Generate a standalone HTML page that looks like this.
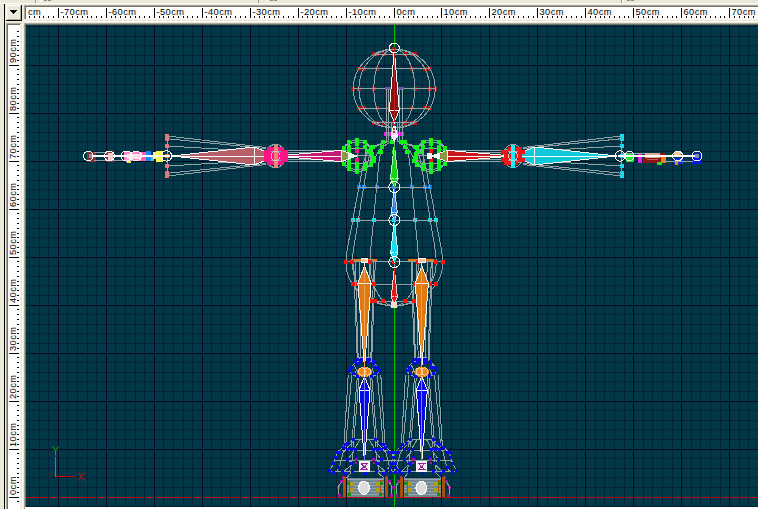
<!DOCTYPE html>
<html><head><meta charset="utf-8"><title>Front view</title>
<style>
html,body{margin:0;padding:0;background:#ece9d8;overflow:hidden}
body{width:758px;height:509px;position:relative;font-family:"Liberation Sans",sans-serif}
svg{position:absolute;left:0;top:0;display:block}
text{font-family:"Liberation Sans",sans-serif;font-size:9.3px;fill:#000;letter-spacing:0.42px}
</style></head><body>
<svg width="758" height="509" viewBox="0 0 758 509">
<rect width="758" height="509" fill="#ece9d8"/>
<!-- top strip -->
<g shape-rendering="crispEdges">
<rect x="0" y="0" width="758" height="3" fill="#ebe8d7"/>
<rect x="0" y="3" width="758" height="1" fill="#ffffff"/>
<rect x="35" y="0" width="1" height="3" fill="#9d9a88"/><rect x="40" y="0" width="2" height="2" fill="#ffffff"/>
<rect x="44" y="0" width="3" height="1" fill="#8c8a7c"/><rect x="48" y="0" width="3" height="1" fill="#8c8a7c"/>
<rect x="258" y="0" width="1" height="3" fill="#9d9a88"/><rect x="266" y="0" width="1" height="2" fill="#ffffff"/>
<rect x="270" y="0" width="3" height="1" fill="#8c8a7c"/><rect x="274" y="0" width="3" height="1" fill="#8c8a7c"/>
<rect x="621" y="0" width="1" height="3" fill="#9d9a88"/><rect x="623" y="0" width="1" height="2" fill="#ffffff"/>
<rect x="627" y="0" width="3" height="1" fill="#8c8a7c"/><rect x="631" y="0" width="3" height="1" fill="#8c8a7c"/>
<!-- left black line -->
<rect x="4" y="4" width="1" height="505" fill="#000"/>
<!-- button -->
<rect x="6" y="5" width="16" height="16" fill="#ece9d8"/>
<rect x="6" y="5" width="15" height="1" fill="#fff"/><rect x="6" y="5" width="1" height="15" fill="#fff"/>
<rect x="6" y="20" width="16" height="1" fill="#000"/><rect x="21" y="5" width="1" height="16" fill="#000"/>
<rect x="7" y="19" width="14" height="1" fill="#aca899"/><rect x="20" y="6" width="1" height="14" fill="#aca899"/>
<path d="M10 10h7v1h-1v1h-1v1h-1v1h-1v-1h-1v-1h-1v-1h-1z" fill="#000"/>
<!-- horizontal ruler -->
<rect x="24" y="5" width="734" height="1" fill="#aca899"/>
<rect x="24" y="5" width="1" height="15" fill="#aca899"/>
<rect x="25" y="6" width="733" height="1" fill="#716f64"/>
<rect x="25" y="6" width="1" height="14" fill="#716f64"/>
<rect x="26" y="7" width="732" height="12" fill="#fff"/>
<rect x="24" y="19" width="734" height="1" fill="#f4f2e8"/>
<rect x="24" y="21" width="734" height="1" fill="#fff"/>
<!-- vertical ruler -->
<rect x="6" y="23" width="15" height="1" fill="#aca899"/>
<rect x="6" y="23" width="1" height="486" fill="#aca899"/>
<rect x="7" y="24" width="14" height="1" fill="#716f64"/>
<rect x="7" y="24" width="1" height="485" fill="#716f64"/>
<rect x="8" y="25" width="12" height="484" fill="#fff"/>
<rect x="20" y="24" width="1" height="485" fill="#f4f2e8"/>
<rect x="22" y="23" width="1" height="486" fill="#fff"/>
<!-- viewport frame -->
<rect x="24" y="23" width="734" height="1" fill="#aca899"/>
<rect x="24" y="23" width="1" height="486" fill="#aca899"/>
<rect x="25" y="24" width="733" height="1" fill="#716f64"/>
<rect x="25" y="24" width="1" height="485" fill="#716f64"/>
<rect x="26" y="25" width="732" height="482" fill="#003848"/>
<rect x="25" y="507" width="733" height="2" fill="#fff"/>
<path stroke="#000" stroke-width="1" d="M29.5 16V18M34.5 16V18M39.5 16V18M43.5 16V18M48.5 16V18M53.5 16V18M58.5 8V18M63.5 16V18M67.5 16V18M72.5 16V18M77.5 16V18M82.5 16V18M87.5 16V18M91.5 16V18M96.5 16V18M101.5 16V18M106.5 8V18M111.5 16V18M115.5 16V18M120.5 16V18M125.5 16V18M130.5 16V18M135.5 16V18M139.5 16V18M144.5 16V18M149.5 16V18M154.5 8V18M159.5 16V18M163.5 16V18M168.5 16V18M173.5 16V18M178.5 16V18M183.5 16V18M187.5 16V18M192.5 16V18M197.5 16V18M202.5 8V18M206.5 16V18M211.5 16V18M216.5 16V18M221.5 16V18M226.5 16V18M230.5 16V18M235.5 16V18M240.5 16V18M245.5 16V18M250.5 8V18M254.5 16V18M259.5 16V18M264.5 16V18M269.5 16V18M274.5 16V18M278.5 16V18M283.5 16V18M288.5 16V18M293.5 16V18M298.5 8V18M302.5 16V18M307.5 16V18M312.5 16V18M317.5 16V18M322.5 16V18M326.5 16V18M331.5 16V18M336.5 16V18M341.5 16V18M346.5 8V18M350.5 16V18M355.5 16V18M360.5 16V18M365.5 16V18M370.5 16V18M374.5 16V18M379.5 16V18M384.5 16V18M389.5 16V18M394.5 8V18M398.5 16V18M403.5 16V18M408.5 16V18M413.5 16V18M417.5 16V18M422.5 16V18M427.5 16V18M432.5 16V18M437.5 16V18M441.5 8V18M446.5 16V18M451.5 16V18M456.5 16V18M461.5 16V18M465.5 16V18M470.5 16V18M475.5 16V18M480.5 16V18M485.5 16V18M489.5 8V18M494.5 16V18M499.5 16V18M504.5 16V18M509.5 16V18M513.5 16V18M518.5 16V18M523.5 16V18M528.5 16V18M533.5 16V18M537.5 8V18M542.5 16V18M547.5 16V18M552.5 16V18M557.5 16V18M561.5 16V18M566.5 16V18M571.5 16V18M576.5 16V18M581.5 16V18M585.5 8V18M590.5 16V18M595.5 16V18M600.5 16V18M604.5 16V18M609.5 16V18M614.5 16V18M619.5 16V18M624.5 16V18M628.5 16V18M633.5 8V18M638.5 16V18M643.5 16V18M648.5 16V18M652.5 16V18M657.5 16V18M662.5 16V18M667.5 16V18M672.5 16V18M676.5 16V18M681.5 8V18M686.5 16V18M691.5 16V18M696.5 16V18M700.5 16V18M705.5 16V18M710.5 16V18M715.5 16V18M720.5 16V18M724.5 16V18M729.5 8V18M734.5 16V18M739.5 16V18M744.5 16V18M748.5 16V18M753.5 16V18M17 501.5H19M9 497.5H19M17 492.5H19M17 487.5H19M17 482.5H19M17 477.5H19M17 473.5H19M17 468.5H19M17 463.5H19M17 458.5H19M17 453.5H19M9 449.5H19M17 444.5H19M17 439.5H19M17 434.5H19M17 429.5H19M17 425.5H19M17 420.5H19M17 415.5H19M17 410.5H19M17 405.5H19M9 401.5H19M17 396.5H19M17 391.5H19M17 386.5H19M17 381.5H19M17 377.5H19M17 372.5H19M17 367.5H19M17 362.5H19M17 357.5H19M9 353.5H19M17 348.5H19M17 343.5H19M17 338.5H19M17 333.5H19M17 329.5H19M17 324.5H19M17 319.5H19M17 314.5H19M17 309.5H19M9 305.5H19M17 300.5H19M17 295.5H19M17 290.5H19M17 285.5H19M17 281.5H19M17 276.5H19M17 271.5H19M17 266.5H19M17 261.5H19M9 257.5H19M17 252.5H19M17 247.5H19M17 242.5H19M17 237.5H19M17 233.5H19M17 228.5H19M17 223.5H19M17 218.5H19M17 213.5H19M9 209.5H19M17 204.5H19M17 199.5H19M17 194.5H19M17 189.5H19M17 185.5H19M17 180.5H19M17 175.5H19M17 170.5H19M17 165.5H19M9 161.5H19M17 156.5H19M17 151.5H19M17 146.5H19M17 141.5H19M17 137.5H19M17 132.5H19M17 127.5H19M17 122.5H19M17 117.5H19M9 113.5H19M17 108.5H19M17 103.5H19M17 98.5H19M17 93.5H19M17 89.5H19M17 84.5H19M17 79.5H19M17 74.5H19M17 69.5H19M9 65.5H19M17 60.5H19M17 55.5H19M17 50.5H19M17 45.5H19M17 41.5H19M17 36.5H19M17 31.5H19"/>
</g>
<g><text x="28" y="15">cm</text><text x="60.5" y="15">-70cm</text><text x="108.5" y="15">-60cm</text><text x="156.5" y="15">-50cm</text><text x="204.5" y="15">-40cm</text><text x="252.5" y="15">-30cm</text><text x="300.5" y="15">-20cm</text><text x="348.5" y="15">-10cm</text><text x="396.5" y="15">0cm</text><text x="443.5" y="15">10cm</text><text x="491.5" y="15">20cm</text><text x="539.5" y="15">30cm</text><text x="587.5" y="15">40cm</text><text x="635.5" y="15">50cm</text><text x="683.5" y="15">60cm</text><text x="731.5" y="15">70cm</text><text transform="translate(15.7 495) rotate(-90)">0cm</text><text transform="translate(15.7 447) rotate(-90)">10cm</text><text transform="translate(15.7 399) rotate(-90)">20cm</text><text transform="translate(15.7 351) rotate(-90)">30cm</text><text transform="translate(15.7 303) rotate(-90)">40cm</text><text transform="translate(15.7 255) rotate(-90)">50cm</text><text transform="translate(15.7 207) rotate(-90)">60cm</text><text transform="translate(15.7 159) rotate(-90)">70cm</text><text transform="translate(15.7 111) rotate(-90)">80cm</text><text transform="translate(15.7 63) rotate(-90)">90cm</text></g>
<g shape-rendering="crispEdges">
<path stroke="#04223a" stroke-width="1" d="M26 506.5H758M26 487.5H758M26 477.5H758M26 468.5H758M26 458.5H758M26 439.5H758M26 429.5H758M26 420.5H758M26 410.5H758M26 391.5H758M26 381.5H758M26 372.5H758M26 362.5H758M26 343.5H758M26 333.5H758M26 324.5H758M26 314.5H758M26 295.5H758M26 285.5H758M26 276.5H758M26 266.5H758M26 247.5H758M26 237.5H758M26 228.5H758M26 218.5H758M26 199.5H758M26 189.5H758M26 180.5H758M26 170.5H758M26 151.5H758M26 141.5H758M26 132.5H758M26 122.5H758M26 103.5H758M26 93.5H758M26 84.5H758M26 74.5H758M26 55.5H758M26 45.5H758M26 36.5H758M26 26.5H758"/>
<path stroke="#000a22" stroke-width="1" d="M26 449.5H758M26 401.5H758M26 353.5H758M26 305.5H758M26 257.5H758M26 209.5H758M26 161.5H758M26 113.5H758M26 65.5H758"/>
<path stroke="#c40010" stroke-width="1" d="M26 497.5H758"/>
<path stroke="#04223a" stroke-width="1" d="M29.5 25V507M39.5 25V507M48.5 25V507M67.5 25V507M77.5 25V507M87.5 25V507M96.5 25V507M115.5 25V507M125.5 25V507M135.5 25V507M144.5 25V507M163.5 25V507M173.5 25V507M183.5 25V507M192.5 25V507M211.5 25V507M221.5 25V507M230.5 25V507M240.5 25V507M259.5 25V507M269.5 25V507M278.5 25V507M288.5 25V507M307.5 25V507M317.5 25V507M326.5 25V507M336.5 25V507M355.5 25V507M365.5 25V507M374.5 25V507M384.5 25V507M403.5 25V507M413.5 25V507M422.5 25V507M432.5 25V507M451.5 25V507M461.5 25V507M470.5 25V507M480.5 25V507M499.5 25V507M509.5 25V507M518.5 25V507M528.5 25V507M547.5 25V507M557.5 25V507M566.5 25V507M576.5 25V507M595.5 25V507M604.5 25V507M614.5 25V507M624.5 25V507M643.5 25V507M652.5 25V507M662.5 25V507M672.5 25V507M691.5 25V507M700.5 25V507M710.5 25V507M720.5 25V507M739.5 25V507M748.5 25V507"/>
<path stroke="#000a22" stroke-width="1" d="M58.5 25V507M106.5 25V507M154.5 25V507M202.5 25V507M250.5 25V507M298.5 25V507M346.5 25V507M441.5 25V507M489.5 25V507M537.5 25V507M585.5 25V507M633.5 25V507M681.5 25V507M729.5 25V507"/>
<path stroke="#00c400" stroke-width="1" d="M394.5 25V507"/>
<path stroke="#00c400" stroke-width="1" d="M55.5 457V477"/>
<path stroke="#c80000" stroke-width="1" d="M56 476.5H76"/>
</g>
<path stroke="#10b010" stroke-width="1" fill="none" d="M52.5 446.5L55.5 450.5L58.5 446.5M55.5 450.5V455.5"/>
<path stroke="#d01010" stroke-width="1" fill="none" d="M78.5 472.5L84.5 480.5M84.5 472.5L78.5 480.5"/>
<g shape-rendering="crispEdges"><rect x="413.0" y="52.0" width="4" height="4" fill="#b01616"/>
<rect x="410.0" y="52.0" width="4" height="4" fill="#b01616"/>
<rect x="403.0" y="52.0" width="4" height="4" fill="#b01616"/>
<rect x="392.0" y="52.0" width="4" height="4" fill="#b01616"/>
<rect x="382.0" y="52.0" width="4" height="4" fill="#b01616"/>
<rect x="375.0" y="52.0" width="4" height="4" fill="#b01616"/>
<rect x="372.0" y="52.0" width="4" height="4" fill="#b01616"/>
<rect x="428.0" y="67.0" width="4" height="4" fill="#b01616"/>
<rect x="423.0" y="67.0" width="4" height="4" fill="#b01616"/>
<rect x="410.0" y="67.0" width="4" height="4" fill="#b01616"/>
<rect x="392.0" y="67.0" width="4" height="4" fill="#b01616"/>
<rect x="375.0" y="67.0" width="4" height="4" fill="#b01616"/>
<rect x="362.0" y="67.0" width="4" height="4" fill="#b01616"/>
<rect x="357.0" y="67.0" width="4" height="4" fill="#b01616"/>
<rect x="433.0" y="87.0" width="4" height="4" fill="#b01616"/>
<rect x="428.0" y="87.0" width="4" height="4" fill="#b01616"/>
<rect x="413.0" y="87.0" width="4" height="4" fill="#b01616"/>
<rect x="392.0" y="87.0" width="4" height="4" fill="#b01616"/>
<rect x="372.0" y="87.0" width="4" height="4" fill="#b01616"/>
<rect x="357.0" y="87.0" width="4" height="4" fill="#b01616"/>
<rect x="351.0" y="87.0" width="4" height="4" fill="#b01616"/>
<rect x="428.0" y="106.0" width="4" height="4" fill="#b01616"/>
<rect x="423.0" y="106.0" width="4" height="4" fill="#b01616"/>
<rect x="410.0" y="106.0" width="4" height="4" fill="#b01616"/>
<rect x="392.0" y="106.0" width="4" height="4" fill="#b01616"/>
<rect x="375.0" y="106.0" width="4" height="4" fill="#b01616"/>
<rect x="362.0" y="106.0" width="4" height="4" fill="#b01616"/>
<rect x="357.0" y="106.0" width="4" height="4" fill="#b01616"/>
<rect x="413.0" y="121.0" width="4" height="4" fill="#b01616"/>
<rect x="410.0" y="121.0" width="4" height="4" fill="#b01616"/>
<rect x="403.0" y="121.0" width="4" height="4" fill="#b01616"/>
<rect x="392.0" y="121.0" width="4" height="4" fill="#b01616"/>
<rect x="382.0" y="121.0" width="4" height="4" fill="#b01616"/>
<rect x="375.0" y="121.0" width="4" height="4" fill="#b01616"/>
<rect x="372.0" y="121.0" width="4" height="4" fill="#b01616"/>
<rect x="392.0" y="47.0" width="4" height="4" fill="#b01616"/>
<rect x="384.0" y="132.0" width="4" height="4" fill="#ff10ff"/>
<rect x="388.0" y="132.0" width="4" height="4" fill="#ff10ff"/>
<rect x="392.0" y="132.0" width="4" height="4" fill="#ff10ff"/>
<rect x="396.0" y="132.0" width="4" height="4" fill="#ff10ff"/>
<rect x="400.0" y="132.0" width="4" height="4" fill="#ff10ff"/>
<rect x="419.0" y="150.0" width="4" height="4" fill="#10f010"/>
<rect x="416.0" y="150.0" width="4" height="4" fill="#10f010"/>
<rect x="406.0" y="150.0" width="4" height="4" fill="#10f010"/>
<rect x="392.0" y="150.0" width="4" height="4" fill="#10f010"/>
<rect x="379.0" y="150.0" width="4" height="4" fill="#10f010"/>
<rect x="369.0" y="150.0" width="4" height="4" fill="#10f010"/>
<rect x="365.0" y="150.0" width="4" height="4" fill="#10f010"/>
<rect x="428.0" y="185.0" width="4" height="4" fill="#1080ff"/>
<rect x="423.0" y="185.0" width="4" height="4" fill="#1080ff"/>
<rect x="410.0" y="185.0" width="4" height="4" fill="#1080ff"/>
<rect x="392.0" y="185.0" width="4" height="4" fill="#1080ff"/>
<rect x="375.0" y="185.0" width="4" height="4" fill="#1080ff"/>
<rect x="362.0" y="185.0" width="4" height="4" fill="#1080ff"/>
<rect x="357.0" y="185.0" width="4" height="4" fill="#1080ff"/>
<rect x="434.0" y="218.0" width="4" height="4" fill="#00f0ff"/>
<rect x="428.0" y="218.0" width="4" height="4" fill="#00f0ff"/>
<rect x="413.0" y="218.0" width="4" height="4" fill="#00f0ff"/>
<rect x="392.0" y="218.0" width="4" height="4" fill="#00f0ff"/>
<rect x="372.0" y="218.0" width="4" height="4" fill="#00f0ff"/>
<rect x="356.0" y="218.0" width="4" height="4" fill="#00f0ff"/>
<rect x="351.0" y="218.0" width="4" height="4" fill="#00f0ff"/>
<rect x="165.0" y="174.0" width="4" height="4" fill="#ee7474"/>
<rect x="165.0" y="171.0" width="4" height="4" fill="#ee7474"/>
<rect x="165.0" y="164.0" width="4" height="4" fill="#ee7474"/>
<rect x="165.0" y="154.0" width="4" height="4" fill="#ee7474"/>
<rect x="165.0" y="144.0" width="4" height="4" fill="#ee7474"/>
<rect x="165.0" y="137.0" width="4" height="4" fill="#ee7474"/>
<rect x="165.0" y="134.0" width="4" height="4" fill="#ee7474"/>
<rect x="620.0" y="174.0" width="4" height="4" fill="#10e0f0"/>
<rect x="620.0" y="171.0" width="4" height="4" fill="#10e0f0"/>
<rect x="620.0" y="164.0" width="4" height="4" fill="#10e0f0"/>
<rect x="620.0" y="154.0" width="4" height="4" fill="#10e0f0"/>
<rect x="620.0" y="144.0" width="4" height="4" fill="#10e0f0"/>
<rect x="620.0" y="137.0" width="4" height="4" fill="#10e0f0"/>
<rect x="620.0" y="134.0" width="4" height="4" fill="#10e0f0"/>
<path d="M86.5 151.5L95.5 151.5L95.5 162.3L86.5 162.3Z" stroke="none" stroke-width="0" fill="#843030"/>
<path d="M105.5 151.0L114.0 151.0L114.0 162.3L105.5 162.3Z" stroke="none" stroke-width="0" fill="#8c3040"/>
<path d="M124.0 151.5L146.0 151.5L146.0 161.0L124.0 161.0Z" stroke="none" stroke-width="0" fill="#ff86c8"/>
<path d="M127.0 161.0L130.5 161.0L130.5 163.0L127.0 163.0Z" stroke="none" stroke-width="0" fill="#f0f040"/>
<path d="M141.0 151.5L145.5 151.5L145.5 161.0L141.0 161.0Z" stroke="none" stroke-width="0" fill="#ff60b0"/>
<path d="M145.5 151.0L150.5 151.0L150.5 160.5L145.5 160.5Z" stroke="none" stroke-width="0" fill="#1484ff"/>
<path d="M150.5 155.0L153.5 155.0L153.5 160.5L150.5 160.5Z" stroke="none" stroke-width="0" fill="#60c0d0"/>
<path d="M152.5 152.0L157.0 152.0L157.0 159.0L152.5 159.0Z" stroke="none" stroke-width="0" fill="#f0f0b0"/>
<path d="M155.5 151.0L162.5 151.0L162.5 161.5L155.5 161.5Z" stroke="none" stroke-width="0" fill="#fbfb58"/>
<path d="M625.5 152.5L634.0 152.5L634.0 161.5L625.5 161.5Z" stroke="none" stroke-width="0" fill="#20e828"/>
<path d="M637.8 152.5L642.0 152.5L642.0 163.0L637.8 163.0Z" stroke="none" stroke-width="0" fill="#f020e8"/>
<path d="M642.5 152.5L665.0 152.5L665.0 163.0L642.5 163.0Z" stroke="none" stroke-width="0" fill="#8c1414"/>
<path d="M645.0 153.0L660.0 153.0L660.0 157.5L645.0 157.5Z" stroke="none" stroke-width="0" fill="#d8a898"/>
<path d="M647.0 158.5L658.0 158.5L658.0 160.0L647.0 160.0Z" stroke="none" stroke-width="0" fill="#c06050"/>
<path d="M661.0 157.0L665.5 157.0L665.5 163.0L661.0 163.0Z" stroke="none" stroke-width="0" fill="#f08020"/>
<path d="M657.0 162.3L661.5 162.3L661.5 164.5L657.0 164.5Z" stroke="none" stroke-width="0" fill="#20e020"/>
<path d="M674.0 158.0L683.0 158.0L683.0 164.0L674.0 164.0Z" stroke="none" stroke-width="0" fill="#1030f0"/>
<path d="M673.5 152.0L681.0 152.0L681.0 157.0L673.5 157.0Z" stroke="none" stroke-width="0" fill="#f0c8a0"/>
<path d="M675.0 162.0L678.0 162.0L678.0 164.5L675.0 164.5Z" stroke="none" stroke-width="0" fill="#f08020"/>
<path d="M692.0 152.5L700.5 152.5L700.5 164.0L692.0 164.0Z" stroke="none" stroke-width="0" fill="#0818e0"/>
<path d="M351.0 260.5L377.0 260.5" stroke="#e07a10" stroke-width="3.4" fill="none"/>
<ellipse cx="364.5" cy="372.0" rx="7.6" ry="5.4" stroke="none" stroke-width="0" fill="#f08414"/>
<path d="M346.7 478.0L383.9 478.0L383.9 496.5L346.7 496.5Z" stroke="none" stroke-width="0" fill="#6f8890"/>
<rect x="342.0" y="476.0" width="3" height="3" fill="#a010a0"/>
<rect x="385.0" y="476.0" width="3" height="3" fill="#a010a0"/>
<rect x="340.0" y="480.0" width="3" height="3" fill="#a010a0"/>
<rect x="388.0" y="480.0" width="3" height="3" fill="#a010a0"/>
<rect x="337.0" y="486.0" width="3" height="3" fill="#a010a0"/>
<rect x="391.0" y="486.0" width="3" height="3" fill="#a010a0"/>
<rect x="338.0" y="494.0" width="3" height="3" fill="#a010a0"/>
<rect x="390.0" y="494.0" width="3" height="3" fill="#a010a0"/>
<path d="M408.3 260.5L434.3 260.5" stroke="#e07a10" stroke-width="3.4" fill="none"/>
<ellipse cx="421.8" cy="372.0" rx="7.6" ry="5.4" stroke="none" stroke-width="0" fill="#f08414"/>
<path d="M404.0 478.0L441.2 478.0L441.2 496.5L404.0 496.5Z" stroke="none" stroke-width="0" fill="#6f8890"/>
<rect x="400.0" y="476.0" width="3" height="3" fill="#a010a0"/>
<rect x="443.0" y="476.0" width="3" height="3" fill="#a010a0"/>
<rect x="397.0" y="480.0" width="3" height="3" fill="#a010a0"/>
<rect x="445.0" y="480.0" width="3" height="3" fill="#a010a0"/>
<rect x="394.0" y="486.0" width="3" height="3" fill="#a010a0"/>
<rect x="448.0" y="486.0" width="3" height="3" fill="#a010a0"/>
<rect x="395.0" y="494.0" width="3" height="3" fill="#a010a0"/>
<rect x="447.0" y="494.0" width="3" height="3" fill="#a010a0"/><ellipse cx="394.3" cy="88.6" rx="41.0" ry="39.5" stroke="#90a3a7" stroke-width="1" fill="none"/>
<ellipse cx="394.3" cy="88.6" rx="35.5" ry="39.5" stroke="#90a3a7" stroke-width="1" fill="none"/>
<ellipse cx="394.3" cy="88.6" rx="20.5" ry="39.5" stroke="#90a3a7" stroke-width="1" fill="none"/>
<path d="M394.3 49.1L394.3 128.1" stroke="#90a3a7" stroke-width="1" fill="none"/>
<path d="M373.8 54.4L414.8 54.4" stroke="#90a3a7" stroke-width="1" fill="none"/>
<path d="M358.8 68.8L429.8 68.8" stroke="#90a3a7" stroke-width="1" fill="none"/>
<path d="M353.3 88.6L435.3 88.6" stroke="#90a3a7" stroke-width="1" fill="none"/>
<path d="M358.8 108.3L429.8 108.3" stroke="#90a3a7" stroke-width="1" fill="none"/>
<path d="M373.8 122.8L414.8 122.8" stroke="#90a3a7" stroke-width="1" fill="none"/>
<path d="M384.5 88.5L404.0 88.5" stroke="#6a58a8" stroke-width="2.4" fill="none"/>
<path d="M386.3 89.0L386.3 141.0" stroke="#90a3a7" stroke-width="1" fill="none"/>
<path d="M388.3 89.0L388.3 141.0" stroke="#90a3a7" stroke-width="1" fill="none"/>
<path d="M399.3 89.0L399.3 141.0" stroke="#90a3a7" stroke-width="1" fill="none"/>
<path d="M402.3 89.0L402.3 141.0" stroke="#90a3a7" stroke-width="1" fill="none"/>
<path d="M391.5 122.0L391.5 141.0" stroke="#90a3a7" stroke-width="1" fill="none"/>
<path d="M397.0 122.0L397.0 141.0" stroke="#90a3a7" stroke-width="1" fill="none"/>
<path d="M388.3 141.0L388.1 141.1L387.8 141.2L387.5 141.2L387.2 141.3L386.8 141.4L386.3 141.6L385.8 141.8L385.1 142.1L384.3 142.5L383.3 143.0L382.1 143.5L380.7 143.9L379.1 144.4L377.3 144.8L375.5 145.4L373.7 146.2L371.9 147.2L370.2 148.4L368.6 150.0L367.3 152.0L366.1 154.5L365.1 157.4L364.2 160.6L363.3 164.2L362.5 168.0L361.8 171.9L361.1 175.8L360.4 179.7L359.7 183.5L359.0 187.0L358.3 190.4L357.6 193.6L357.0 196.9L356.4 200.1L355.8 203.3L355.2 206.5L354.6 209.8L354.0 213.2L353.4 216.7L352.8 220.3L352.1 224.2L351.3 228.3L350.4 232.7L349.5 237.1L348.6 241.6L347.8 246.0L347.1 250.3L346.5 254.4L346.1 258.2L346.0 261.6L346.1 264.7L346.3 267.5L346.6 270.0L347.1 272.4L347.8 274.6L348.5 276.7L349.4 278.7L350.4 280.6L351.6 282.6L352.8 284.5L354.2 286.5L355.8 288.4L357.6 290.3L359.4 292.1L361.4 293.8L363.5 295.5L365.6 297.0L367.8 298.5L369.9 299.8L372.0 301.0L374.2 302.0L376.6 302.9L379.2 303.7L381.8 304.4L384.4 304.9L386.8 305.4L389.2 305.8L391.2 306.2L393.0 306.5L394.3 306.8" stroke="#90a3a7" stroke-width="1" fill="none"/>
<path d="M400.3 141.0L400.5 141.1L400.8 141.2L401.1 141.2L401.4 141.3L401.8 141.4L402.3 141.6L402.8 141.8L403.5 142.1L404.3 142.5L405.3 143.0L406.5 143.5L407.9 143.9L409.5 144.4L411.3 144.8L413.1 145.4L414.9 146.2L416.7 147.2L418.4 148.4L420.0 150.0L421.3 152.0L422.5 154.5L423.5 157.4L424.4 160.6L425.3 164.2L426.1 168.0L426.8 171.9L427.5 175.8L428.2 179.7L428.9 183.5L429.6 187.0L430.3 190.4L431.0 193.6L431.6 196.9L432.2 200.1L432.8 203.3L433.4 206.5L434.0 209.8L434.6 213.2L435.2 216.7L435.8 220.3L436.5 224.2L437.3 228.3L438.2 232.7L439.1 237.1L440.0 241.6L440.8 246.0L441.5 250.3L442.1 254.4L442.5 258.2L442.6 261.6L442.5 264.7L442.3 267.5L442.0 270.0L441.5 272.4L440.8 274.6L440.1 276.7L439.2 278.7L438.2 280.6L437.0 282.6L435.8 284.5L434.4 286.5L432.8 288.4L431.0 290.3L429.2 292.1L427.2 293.8L425.1 295.5L423.0 297.0L420.8 298.5L418.7 299.8L416.6 301.0L414.4 302.0L412.0 302.9L409.4 303.7L406.8 304.4L404.2 304.9L401.8 305.4L399.4 305.8L397.4 306.2L395.6 306.5L394.3 306.8" stroke="#90a3a7" stroke-width="1" fill="none"/>
<path d="M389.1 141.0L388.9 141.1L388.7 141.2L388.4 141.2L388.1 141.3L387.8 141.4L387.4 141.6L386.9 141.8L386.3 142.1L385.6 142.5L384.8 143.0L383.7 143.5L382.5 143.9L381.1 144.4L379.6 144.8L378.0 145.4L376.4 146.2L374.9 147.2L373.4 148.4L372.1 150.0L370.9 152.0L369.9 154.5L369.0 157.4L368.2 160.6L367.5 164.2L366.8 168.0L366.2 171.9L365.5 175.8L364.9 179.7L364.3 183.5L363.7 187.0L363.1 190.4L362.5 193.6L362.0 196.9L361.5 200.1L361.0 203.3L360.5 206.5L360.0 209.8L359.4 213.2L358.9 216.7L358.4 220.3L357.7 224.2L357.0 228.3L356.3 232.7L355.5 237.1L354.7 241.6L354.0 246.0L353.4 250.3L352.9 254.4L352.6 258.2L352.5 261.6L352.5 264.7L352.7 267.5L353.0 270.0L353.5 272.4L354.0 274.6L354.7 276.7L355.4 278.7L356.3 280.6L357.3 282.6L358.4 284.5L359.6 286.5L361.0 288.4L362.5 290.3L364.1 292.1L365.8 293.8L367.6 295.5L369.5 297.0L371.3 298.5L373.2 299.8L375.0 301.0L376.9 302.0L379.0 302.9L381.2 303.7L383.4 304.4L385.7 304.9L387.8 305.4L389.8 305.8L391.6 306.2L393.1 306.5L394.3 306.8" stroke="#90a3a7" stroke-width="1" fill="none"/>
<path d="M399.5 141.0L399.7 141.1L399.9 141.2L400.2 141.2L400.5 141.3L400.8 141.4L401.2 141.6L401.7 141.8L402.3 142.1L403.0 142.5L403.8 143.0L404.9 143.5L406.1 143.9L407.5 144.4L409.0 144.8L410.6 145.4L412.2 146.2L413.7 147.2L415.2 148.4L416.5 150.0L417.7 152.0L418.7 154.5L419.6 157.4L420.4 160.6L421.1 164.2L421.8 168.0L422.4 171.9L423.1 175.8L423.7 179.7L424.3 183.5L424.9 187.0L425.5 190.4L426.1 193.6L426.6 196.9L427.1 200.1L427.6 203.3L428.1 206.5L428.6 209.8L429.2 213.2L429.7 216.7L430.2 220.3L430.9 224.2L431.6 228.3L432.3 232.7L433.1 237.1L433.9 241.6L434.6 246.0L435.2 250.3L435.7 254.4L436.0 258.2L436.1 261.6L436.1 264.7L435.9 267.5L435.6 270.0L435.1 272.4L434.6 274.6L433.9 276.7L433.2 278.7L432.3 280.6L431.3 282.6L430.2 284.5L429.0 286.5L427.6 288.4L426.1 290.3L424.5 292.1L422.8 293.8L421.0 295.5L419.1 297.0L417.3 298.5L415.4 299.8L413.6 301.0L411.7 302.0L409.6 302.9L407.4 303.7L405.2 304.4L402.9 304.9L400.8 305.4L398.8 305.8L397.0 306.2L395.5 306.5L394.3 306.8" stroke="#90a3a7" stroke-width="1" fill="none"/>
<path d="M391.3 141.0L391.2 141.1L391.0 141.2L390.9 141.2L390.7 141.3L390.6 141.4L390.3 141.6L390.0 141.8L389.7 142.1L389.3 142.5L388.8 143.0L388.2 143.5L387.5 143.9L386.7 144.4L385.8 144.8L384.9 145.4L384.0 146.2L383.1 147.2L382.2 148.4L381.5 150.0L380.8 152.0L380.2 154.5L379.7 157.4L379.2 160.6L378.8 164.2L378.4 168.0L378.0 171.9L377.7 175.8L377.4 179.7L377.0 183.5L376.7 187.0L376.3 190.4L376.0 193.6L375.7 196.9L375.3 200.1L375.1 203.3L374.8 206.5L374.5 209.8L374.2 213.2L373.9 216.7L373.6 220.3L373.2 224.2L372.8 228.3L372.3 232.7L371.9 237.1L371.4 241.6L371.0 246.0L370.7 250.3L370.4 254.4L370.2 258.2L370.2 261.6L370.2 264.7L370.3 267.5L370.5 270.0L370.7 272.4L371.0 274.6L371.4 276.7L371.9 278.7L372.4 280.6L372.9 282.6L373.6 284.5L374.3 286.5L375.0 288.4L375.9 290.3L376.9 292.1L377.9 293.8L378.9 295.5L380.0 297.0L381.0 298.5L382.1 299.8L383.2 301.0L384.3 302.0L385.5 302.9L386.7 303.7L388.0 304.4L389.3 304.9L390.6 305.4L391.7 305.8L392.8 306.2L393.6 306.5L394.3 306.8" stroke="#90a3a7" stroke-width="1" fill="none"/>
<path d="M397.3 141.0L397.4 141.1L397.6 141.2L397.7 141.2L397.9 141.3L398.1 141.4L398.3 141.6L398.6 141.8L398.9 142.1L399.3 142.5L399.8 143.0L400.4 143.5L401.1 143.9L401.9 144.4L402.8 144.8L403.7 145.4L404.6 146.2L405.5 147.2L406.4 148.4L407.1 150.0L407.8 152.0L408.4 154.5L408.9 157.4L409.4 160.6L409.8 164.2L410.2 168.0L410.6 171.9L410.9 175.8L411.2 179.7L411.6 183.5L411.9 187.0L412.3 190.4L412.6 193.6L412.9 196.9L413.3 200.1L413.5 203.3L413.8 206.5L414.1 209.8L414.4 213.2L414.7 216.7L415.1 220.3L415.4 224.2L415.8 228.3L416.3 232.7L416.7 237.1L417.2 241.6L417.6 246.0L417.9 250.3L418.2 254.4L418.4 258.2L418.4 261.6L418.4 264.7L418.3 267.5L418.1 270.0L417.9 272.4L417.6 274.6L417.2 276.7L416.7 278.7L416.2 280.6L415.7 282.6L415.1 284.5L414.3 286.5L413.6 288.4L412.7 290.3L411.7 292.1L410.7 293.8L409.7 295.5L408.6 297.0L407.6 298.5L406.5 299.8L405.4 301.0L404.3 302.0L403.1 302.9L401.9 303.7L400.6 304.4L399.3 304.9L398.0 305.4L396.9 305.8L395.8 306.2L395.0 306.5L394.3 306.8" stroke="#90a3a7" stroke-width="1" fill="none"/>
<path d="M394.3 141.0L394.3 306.8" stroke="#90a3a7" stroke-width="1" fill="none"/>
<path d="M359.0 187.0L429.6 187.0" stroke="#90a3a7" stroke-width="1" fill="none"/>
<path d="M352.8 220.3L435.8 220.3" stroke="#90a3a7" stroke-width="1" fill="none"/>
<path d="M346.0 261.6L442.6 261.6" stroke="#90a3a7" stroke-width="1" fill="none"/>
<path d="M352.8 284.5L435.8 284.5" stroke="#90a3a7" stroke-width="1" fill="none"/>
<path d="M372.0 301.0L416.6 301.0" stroke="#90a3a7" stroke-width="1" fill="none"/>
<path d="M389.0 141.0L374.0 147.0L367.0 152.0" stroke="#90a3a7" stroke-width="1" fill="none"/>
<path d="M399.6 141.0L414.6 147.0L421.6 152.0" stroke="#90a3a7" stroke-width="1" fill="none"/>
<path d="M385.0 143.0L378.0 152.0L372.0 165.0" stroke="#90a3a7" stroke-width="1" fill="none"/>
<path d="M403.6 143.0L410.6 152.0L416.6 165.0" stroke="#90a3a7" stroke-width="1" fill="none"/>
<ellipse cx="357.2" cy="155.8" rx="15.8" ry="15.8" stroke="#90a3a7" stroke-width="1" fill="none"/>
<ellipse cx="357.2" cy="155.8" rx="15.8" ry="13.7" stroke="#90a3a7" stroke-width="1" fill="none"/>
<ellipse cx="357.2" cy="155.8" rx="15.8" ry="7.9" stroke="#90a3a7" stroke-width="1" fill="none"/>
<path d="M341.4 155.8L373.0 155.8" stroke="#90a3a7" stroke-width="1" fill="none"/>
<path d="M343.5 147.9L343.5 163.7" stroke="#90a3a7" stroke-width="1" fill="none"/>
<path d="M349.3 142.1L349.3 169.5" stroke="#90a3a7" stroke-width="1" fill="none"/>
<path d="M357.2 140.0L357.2 171.6" stroke="#90a3a7" stroke-width="1" fill="none"/>
<path d="M365.1 142.1L365.1 169.5" stroke="#90a3a7" stroke-width="1" fill="none"/>
<path d="M370.9 147.9L370.9 163.7" stroke="#90a3a7" stroke-width="1" fill="none"/>
<ellipse cx="431.1" cy="155.8" rx="15.8" ry="15.8" stroke="#90a3a7" stroke-width="1" fill="none"/>
<ellipse cx="431.1" cy="155.8" rx="15.8" ry="13.7" stroke="#90a3a7" stroke-width="1" fill="none"/>
<ellipse cx="431.1" cy="155.8" rx="15.8" ry="7.9" stroke="#90a3a7" stroke-width="1" fill="none"/>
<path d="M415.3 155.8L446.9 155.8" stroke="#90a3a7" stroke-width="1" fill="none"/>
<path d="M417.4 147.9L417.4 163.7" stroke="#90a3a7" stroke-width="1" fill="none"/>
<path d="M423.2 142.1L423.2 169.5" stroke="#90a3a7" stroke-width="1" fill="none"/>
<path d="M431.1 140.0L431.1 171.6" stroke="#90a3a7" stroke-width="1" fill="none"/>
<path d="M439.0 142.1L439.0 169.5" stroke="#90a3a7" stroke-width="1" fill="none"/>
<path d="M444.8 147.9L444.8 163.7" stroke="#90a3a7" stroke-width="1" fill="none"/>
<path d="M284.0 150.5L342.0 150.0" stroke="#90a3a7" stroke-width="1" fill="none"/>
<path d="M504.0 150.5L446.0 150.0" stroke="#90a3a7" stroke-width="1" fill="none"/>
<path d="M284.0 161.5L342.0 162.0" stroke="#90a3a7" stroke-width="1" fill="none"/>
<path d="M504.0 161.5L446.0 162.0" stroke="#90a3a7" stroke-width="1" fill="none"/>
<path d="M284.0 153.0L342.0 152.5" stroke="#90a3a7" stroke-width="1" fill="none"/>
<path d="M504.0 153.0L446.0 152.5" stroke="#90a3a7" stroke-width="1" fill="none"/>
<path d="M284.0 159.0L342.0 159.5" stroke="#90a3a7" stroke-width="1" fill="none"/>
<path d="M504.0 159.0L446.0 159.5" stroke="#90a3a7" stroke-width="1" fill="none"/>
<ellipse cx="275.6" cy="156.0" rx="9.9" ry="11.6" stroke="#90a3a7" stroke-width="1" fill="none"/>
<ellipse cx="275.6" cy="156.0" rx="9.9" ry="8.1" stroke="#90a3a7" stroke-width="1" fill="none"/>
<ellipse cx="513.0" cy="156.0" rx="9.9" ry="11.6" stroke="#90a3a7" stroke-width="1" fill="none"/>
<ellipse cx="513.0" cy="156.0" rx="9.9" ry="8.1" stroke="#90a3a7" stroke-width="1" fill="none"/>
<path d="M167.0 136.0L167.0 176.0" stroke="#90a3a7" stroke-width="1" fill="none"/>
<path d="M167.0 176.0L266.0 164.5" stroke="#90a3a7" stroke-width="1" fill="none"/>
<path d="M167.0 173.3L266.0 163.4" stroke="#90a3a7" stroke-width="1" fill="none"/>
<path d="M167.0 166.0L266.0 160.2" stroke="#90a3a7" stroke-width="1" fill="none"/>
<path d="M167.0 146.0L266.0 151.8" stroke="#90a3a7" stroke-width="1" fill="none"/>
<path d="M167.0 138.7L266.0 148.6" stroke="#90a3a7" stroke-width="1" fill="none"/>
<path d="M167.0 136.0L266.0 147.5" stroke="#90a3a7" stroke-width="1" fill="none"/>
<path d="M621.6 136.0L621.6 176.0" stroke="#90a3a7" stroke-width="1" fill="none"/>
<path d="M621.6 176.0L522.6 164.5" stroke="#90a3a7" stroke-width="1" fill="none"/>
<path d="M621.6 173.3L522.6 163.4" stroke="#90a3a7" stroke-width="1" fill="none"/>
<path d="M621.6 166.0L522.6 160.2" stroke="#90a3a7" stroke-width="1" fill="none"/>
<path d="M621.6 146.0L522.6 151.8" stroke="#90a3a7" stroke-width="1" fill="none"/>
<path d="M621.6 138.7L522.6 148.6" stroke="#90a3a7" stroke-width="1" fill="none"/>
<path d="M621.6 136.0L522.6 147.5" stroke="#90a3a7" stroke-width="1" fill="none"/>
<path d="M94.0 160.5L123.0 160.5" stroke="#90a3a7" stroke-width="1" fill="none"/>
<path d="M94.0 152.5L106.0 152.5" stroke="#90a3a7" stroke-width="1" fill="none"/>
<path d="M622.0 153.0L645.0 153.0" stroke="#90a3a7" stroke-width="1" fill="none"/>
<path d="M664.0 161.5L693.0 161.5" stroke="#90a3a7" stroke-width="1" fill="none"/>
<path d="M375.3 262.0L374.3 290.0L372.1 350.0L371.7 362.0" stroke="#90a3a7" stroke-width="1" fill="none"/>
<path d="M373.9 262.0L373.0 290.0L371.1 350.0L370.7 362.0" stroke="#90a3a7" stroke-width="1" fill="none"/>
<path d="M369.9 262.0L369.4 290.0L368.3 350.0L368.1 362.0" stroke="#90a3a7" stroke-width="1" fill="none"/>
<path d="M359.1 262.0L359.6 290.0L360.7 350.0L360.9 362.0" stroke="#90a3a7" stroke-width="1" fill="none"/>
<path d="M355.1 262.0L356.0 290.0L357.9 350.0L358.3 362.0" stroke="#90a3a7" stroke-width="1" fill="none"/>
<path d="M353.7 262.0L354.7 290.0L356.9 350.0L357.3 362.0" stroke="#90a3a7" stroke-width="1" fill="none"/>
<ellipse cx="362.0" cy="371.5" rx="3.2" ry="3.6" stroke="#f8d0a0" stroke-width="1" fill="none"/>
<ellipse cx="367.3" cy="371.5" rx="3.2" ry="3.6" stroke="#f8d0a0" stroke-width="1" fill="none"/>
<path d="M349.5 371.5L351.5 366.5L356.5 361.5L359.5 358.0L364.5 357.0L369.5 358.0L372.5 361.5L377.5 366.5L379.5 371.5" stroke="#90a3a7" stroke-width="1" fill="none"/>
<path d="M349.5 371.5L353.5 375.0L358.5 377.5" stroke="#90a3a7" stroke-width="1" fill="none"/>
<path d="M379.5 371.5L375.5 375.0L370.5 377.5" stroke="#90a3a7" stroke-width="1" fill="none"/>
<path d="M353.5 364.5L356.5 369.5L354.5 374.5" stroke="#90a3a7" stroke-width="1" fill="none"/>
<path d="M375.5 364.5L372.5 369.5L374.5 374.5" stroke="#90a3a7" stroke-width="1" fill="none"/>
<path d="M348.2 375.0L343.9 447.0" stroke="#90a3a7" stroke-width="1" fill="none"/>
<path d="M380.8 375.0L385.1 447.0" stroke="#90a3a7" stroke-width="1" fill="none"/>
<path d="M351.7 375.0L345.6 447.0" stroke="#90a3a7" stroke-width="1" fill="none"/>
<path d="M377.3 375.0L383.4 447.0" stroke="#90a3a7" stroke-width="1" fill="none"/>
<path d="M357.4 375.0L351.5 447.0" stroke="#90a3a7" stroke-width="1" fill="none"/>
<path d="M371.6 375.0L377.5 447.0" stroke="#90a3a7" stroke-width="1" fill="none"/>
<path d="M359.2 375.0L353.3 447.0" stroke="#90a3a7" stroke-width="1" fill="none"/>
<path d="M369.8 375.0L375.7 447.0" stroke="#90a3a7" stroke-width="1" fill="none"/>
<path d="M353.2 439.5L375.8 439.5" stroke="#90a3a7" stroke-width="1" fill="none"/>
<path d="M341.5 450.0L387.5 450.0" stroke="#90a3a7" stroke-width="1" fill="none"/>
<path d="M335.0 460.0L394.0 460.0" stroke="#90a3a7" stroke-width="1" fill="none"/>
<path d="M329.0 471.5L400.0 471.5" stroke="#90a3a7" stroke-width="1" fill="none"/>
<path d="M353.2 439.5L348.8 443.0L343.0 447.0L337.0 452.5L333.5 464.0L329.0 471.5" stroke="#90a3a7" stroke-width="1" fill="none"/>
<path d="M375.8 439.5L380.2 443.0L386.0 447.0L392.0 452.5L395.5 464.0L400.0 471.5" stroke="#90a3a7" stroke-width="1" fill="none"/>
<path d="M355.7 439.5L352.3 443.0L347.7 447.0L343.1 452.5L340.3 464.0L336.8 471.5" stroke="#90a3a7" stroke-width="1" fill="none"/>
<path d="M373.3 439.5L376.7 443.0L381.3 447.0L385.9 452.5L388.7 464.0L392.2 471.5" stroke="#90a3a7" stroke-width="1" fill="none"/>
<path d="M359.8 439.5L357.9 443.0L355.5 447.0L352.9 452.5L351.5 464.0L349.6 471.5" stroke="#90a3a7" stroke-width="1" fill="none"/>
<path d="M369.2 439.5L371.1 443.0L373.5 447.0L376.1 452.5L377.5 464.0L379.4 471.5" stroke="#90a3a7" stroke-width="1" fill="none"/>
<path d="M355.0 450.0L348.0 459.0L352.0 464.0L344.5 471.0" stroke="#90a3a7" stroke-width="1" fill="none"/>
<path d="M374.0 450.0L381.0 459.0L377.0 464.0L384.5 471.0" stroke="#90a3a7" stroke-width="1" fill="none"/>
<path d="M346.7 479.5L383.9 479.5" stroke="#90a8ae" stroke-width="1" fill="none"/>
<path d="M346.7 482.5L383.9 482.5" stroke="#90a8ae" stroke-width="1" fill="none"/>
<path d="M346.7 485.5L383.9 485.5" stroke="#90a8ae" stroke-width="1" fill="none"/>
<path d="M346.7 488.5L383.9 488.5" stroke="#90a8ae" stroke-width="1" fill="none"/>
<path d="M346.7 491.5L383.9 491.5" stroke="#90a8ae" stroke-width="1" fill="none"/>
<path d="M346.7 494.5L383.9 494.5" stroke="#90a8ae" stroke-width="1" fill="none"/>
<path d="M346.7 478.0L351.5 472.0" stroke="#90a3a7" stroke-width="1" fill="none"/>
<path d="M383.9 478.0L377.5 472.0" stroke="#90a3a7" stroke-width="1" fill="none"/>
<path d="M341.7 482.0L338.7 486.0L338.7 494.0" stroke="#90a3a7" stroke-width="1" fill="none"/>
<path d="M388.9 482.0L391.9 486.0L391.9 494.0" stroke="#90a3a7" stroke-width="1" fill="none"/>
<path d="M432.6 262.0L431.6 290.0L429.4 350.0L429.0 362.0" stroke="#90a3a7" stroke-width="1" fill="none"/>
<path d="M431.2 262.0L430.3 290.0L428.4 350.0L428.0 362.0" stroke="#90a3a7" stroke-width="1" fill="none"/>
<path d="M427.2 262.0L426.7 290.0L425.6 350.0L425.4 362.0" stroke="#90a3a7" stroke-width="1" fill="none"/>
<path d="M416.4 262.0L416.9 290.0L418.0 350.0L418.2 362.0" stroke="#90a3a7" stroke-width="1" fill="none"/>
<path d="M412.4 262.0L413.3 290.0L415.2 350.0L415.6 362.0" stroke="#90a3a7" stroke-width="1" fill="none"/>
<path d="M411.0 262.0L412.0 290.0L414.2 350.0L414.6 362.0" stroke="#90a3a7" stroke-width="1" fill="none"/>
<ellipse cx="419.3" cy="371.5" rx="3.2" ry="3.6" stroke="#f8d0a0" stroke-width="1" fill="none"/>
<ellipse cx="424.6" cy="371.5" rx="3.2" ry="3.6" stroke="#f8d0a0" stroke-width="1" fill="none"/>
<path d="M406.8 371.5L408.8 366.5L413.8 361.5L416.8 358.0L421.8 357.0L426.8 358.0L429.8 361.5L434.8 366.5L436.8 371.5" stroke="#90a3a7" stroke-width="1" fill="none"/>
<path d="M406.8 371.5L410.8 375.0L415.8 377.5" stroke="#90a3a7" stroke-width="1" fill="none"/>
<path d="M436.8 371.5L432.8 375.0L427.8 377.5" stroke="#90a3a7" stroke-width="1" fill="none"/>
<path d="M410.8 364.5L413.8 369.5L411.8 374.5" stroke="#90a3a7" stroke-width="1" fill="none"/>
<path d="M432.8 364.5L429.8 369.5L431.8 374.5" stroke="#90a3a7" stroke-width="1" fill="none"/>
<path d="M405.5 375.0L401.2 447.0" stroke="#90a3a7" stroke-width="1" fill="none"/>
<path d="M438.1 375.0L442.4 447.0" stroke="#90a3a7" stroke-width="1" fill="none"/>
<path d="M409.0 375.0L402.9 447.0" stroke="#90a3a7" stroke-width="1" fill="none"/>
<path d="M434.6 375.0L440.7 447.0" stroke="#90a3a7" stroke-width="1" fill="none"/>
<path d="M414.7 375.0L408.8 447.0" stroke="#90a3a7" stroke-width="1" fill="none"/>
<path d="M428.9 375.0L434.8 447.0" stroke="#90a3a7" stroke-width="1" fill="none"/>
<path d="M416.5 375.0L410.6 447.0" stroke="#90a3a7" stroke-width="1" fill="none"/>
<path d="M427.1 375.0L433.0 447.0" stroke="#90a3a7" stroke-width="1" fill="none"/>
<path d="M410.5 439.5L433.1 439.5" stroke="#90a3a7" stroke-width="1" fill="none"/>
<path d="M398.8 450.0L444.8 450.0" stroke="#90a3a7" stroke-width="1" fill="none"/>
<path d="M392.3 460.0L451.3 460.0" stroke="#90a3a7" stroke-width="1" fill="none"/>
<path d="M386.3 471.5L457.3 471.5" stroke="#90a3a7" stroke-width="1" fill="none"/>
<path d="M410.5 439.5L406.1 443.0L400.3 447.0L394.3 452.5L390.8 464.0L386.3 471.5" stroke="#90a3a7" stroke-width="1" fill="none"/>
<path d="M433.1 439.5L437.5 443.0L443.3 447.0L449.3 452.5L452.8 464.0L457.3 471.5" stroke="#90a3a7" stroke-width="1" fill="none"/>
<path d="M413.0 439.5L409.6 443.0L405.0 447.0L400.4 452.5L397.6 464.0L394.1 471.5" stroke="#90a3a7" stroke-width="1" fill="none"/>
<path d="M430.6 439.5L434.0 443.0L438.6 447.0L443.2 452.5L446.0 464.0L449.5 471.5" stroke="#90a3a7" stroke-width="1" fill="none"/>
<path d="M417.1 439.5L415.2 443.0L412.8 447.0L410.2 452.5L408.8 464.0L406.9 471.5" stroke="#90a3a7" stroke-width="1" fill="none"/>
<path d="M426.5 439.5L428.4 443.0L430.8 447.0L433.4 452.5L434.8 464.0L436.7 471.5" stroke="#90a3a7" stroke-width="1" fill="none"/>
<path d="M412.3 450.0L405.3 459.0L409.3 464.0L401.8 471.0" stroke="#90a3a7" stroke-width="1" fill="none"/>
<path d="M431.3 450.0L438.3 459.0L434.3 464.0L441.8 471.0" stroke="#90a3a7" stroke-width="1" fill="none"/>
<path d="M404.0 479.5L441.2 479.5" stroke="#90a8ae" stroke-width="1" fill="none"/>
<path d="M404.0 482.5L441.2 482.5" stroke="#90a8ae" stroke-width="1" fill="none"/>
<path d="M404.0 485.5L441.2 485.5" stroke="#90a8ae" stroke-width="1" fill="none"/>
<path d="M404.0 488.5L441.2 488.5" stroke="#90a8ae" stroke-width="1" fill="none"/>
<path d="M404.0 491.5L441.2 491.5" stroke="#90a8ae" stroke-width="1" fill="none"/>
<path d="M404.0 494.5L441.2 494.5" stroke="#90a8ae" stroke-width="1" fill="none"/>
<path d="M404.0 478.0L408.8 472.0" stroke="#90a3a7" stroke-width="1" fill="none"/>
<path d="M441.2 478.0L434.8 472.0" stroke="#90a3a7" stroke-width="1" fill="none"/>
<path d="M399.0 482.0L396.0 486.0L396.0 494.0" stroke="#90a3a7" stroke-width="1" fill="none"/>
<path d="M446.2 482.0L449.2 486.0L449.2 494.0" stroke="#90a3a7" stroke-width="1" fill="none"/><rect x="441.0" y="260.0" width="4" height="4" fill="#ff1010"/>
<rect x="434.0" y="260.0" width="4" height="4" fill="#ff1010"/>
<rect x="416.0" y="260.0" width="4" height="4" fill="#ff1010"/>
<rect x="392.0" y="260.0" width="4" height="4" fill="#ff1010"/>
<rect x="368.0" y="260.0" width="4" height="4" fill="#ff1010"/>
<rect x="350.0" y="260.0" width="4" height="4" fill="#ff1010"/>
<rect x="344.0" y="260.0" width="4" height="4" fill="#ff1010"/>
<rect x="434.0" y="282.0" width="4" height="4" fill="#ff1010"/>
<rect x="428.0" y="282.0" width="4" height="4" fill="#ff1010"/>
<rect x="413.0" y="282.0" width="4" height="4" fill="#ff1010"/>
<rect x="392.0" y="282.0" width="4" height="4" fill="#ff1010"/>
<rect x="372.0" y="282.0" width="4" height="4" fill="#ff1010"/>
<rect x="356.0" y="282.0" width="4" height="4" fill="#ff1010"/>
<rect x="351.0" y="282.0" width="4" height="4" fill="#ff1010"/>
<rect x="415.0" y="299.0" width="4" height="4" fill="#ff1010"/>
<rect x="412.0" y="299.0" width="4" height="4" fill="#ff1010"/>
<rect x="403.0" y="299.0" width="4" height="4" fill="#ff1010"/>
<rect x="392.0" y="299.0" width="4" height="4" fill="#ff1010"/>
<rect x="381.0" y="299.0" width="4" height="4" fill="#ff1010"/>
<rect x="373.0" y="299.0" width="4" height="4" fill="#ff1010"/>
<rect x="370.0" y="299.0" width="4" height="4" fill="#ff1010"/>
<rect x="381.0" y="140.0" width="4" height="4" fill="#10f418"/>
<rect x="390.0" y="140.0" width="4" height="4" fill="#10f418"/>
<rect x="399.0" y="140.0" width="4" height="4" fill="#10f418"/>
<rect x="403.0" y="140.0" width="4" height="4" fill="#10f418"/>
<rect x="380.0" y="145.0" width="4" height="4" fill="#10f418"/>
<rect x="403.0" y="145.0" width="4" height="4" fill="#10f418"/>
<rect x="378.0" y="150.0" width="4" height="4" fill="#10f418"/>
<rect x="405.0" y="150.0" width="4" height="4" fill="#10f418"/>
<rect x="342.0" y="162.0" width="4" height="4" fill="#10f418"/>
<rect x="342.0" y="146.0" width="4" height="4" fill="#10f418"/>
<rect x="342.0" y="157.0" width="4" height="4" fill="#10f418"/>
<rect x="342.0" y="150.0" width="4" height="4" fill="#10f418"/>
<rect x="342.0" y="154.0" width="4" height="4" fill="#10f418"/>
<rect x="347.0" y="167.0" width="4" height="4" fill="#10f418"/>
<rect x="347.0" y="140.0" width="4" height="4" fill="#10f418"/>
<rect x="347.0" y="163.0" width="4" height="4" fill="#10f418"/>
<rect x="347.0" y="145.0" width="4" height="4" fill="#10f418"/>
<rect x="347.0" y="159.0" width="4" height="4" fill="#10f418"/>
<rect x="347.0" y="149.0" width="4" height="4" fill="#10f418"/>
<rect x="347.0" y="154.0" width="4" height="4" fill="#10f418"/>
<rect x="355.0" y="170.0" width="4" height="4" fill="#10f418"/>
<rect x="355.0" y="138.0" width="4" height="4" fill="#10f418"/>
<rect x="355.0" y="165.0" width="4" height="4" fill="#10f418"/>
<rect x="355.0" y="142.0" width="4" height="4" fill="#10f418"/>
<rect x="355.0" y="161.0" width="4" height="4" fill="#10f418"/>
<rect x="355.0" y="147.0" width="4" height="4" fill="#10f418"/>
<rect x="363.0" y="167.0" width="4" height="4" fill="#10f418"/>
<rect x="363.0" y="140.0" width="4" height="4" fill="#10f418"/>
<rect x="363.0" y="163.0" width="4" height="4" fill="#10f418"/>
<rect x="363.0" y="145.0" width="4" height="4" fill="#10f418"/>
<rect x="369.0" y="162.0" width="4" height="4" fill="#10f418"/>
<rect x="369.0" y="146.0" width="4" height="4" fill="#10f418"/>
<rect x="369.0" y="145.0" width="4" height="4" fill="#10f418"/>
<rect x="371.0" y="145.0" width="4" height="4" fill="#10f418"/>
<rect x="368.0" y="149.0" width="4" height="4" fill="#10f418"/>
<rect x="370.0" y="152.0" width="4" height="4" fill="#10f418"/>
<rect x="371.0" y="156.0" width="4" height="4" fill="#10f418"/>
<rect x="372.0" y="159.0" width="4" height="4" fill="#10f418"/>
<rect x="369.0" y="163.0" width="4" height="4" fill="#10f418"/>
<rect x="379.0" y="150.0" width="4" height="4" fill="#10f418"/>
<rect x="415.0" y="162.0" width="4" height="4" fill="#10f418"/>
<rect x="415.0" y="146.0" width="4" height="4" fill="#10f418"/>
<rect x="421.0" y="167.0" width="4" height="4" fill="#10f418"/>
<rect x="421.0" y="140.0" width="4" height="4" fill="#10f418"/>
<rect x="421.0" y="163.0" width="4" height="4" fill="#10f418"/>
<rect x="421.0" y="145.0" width="4" height="4" fill="#10f418"/>
<rect x="429.0" y="170.0" width="4" height="4" fill="#10f418"/>
<rect x="429.0" y="138.0" width="4" height="4" fill="#10f418"/>
<rect x="429.0" y="165.0" width="4" height="4" fill="#10f418"/>
<rect x="429.0" y="142.0" width="4" height="4" fill="#10f418"/>
<rect x="429.0" y="161.0" width="4" height="4" fill="#10f418"/>
<rect x="429.0" y="147.0" width="4" height="4" fill="#10f418"/>
<rect x="437.0" y="167.0" width="4" height="4" fill="#10f418"/>
<rect x="437.0" y="140.0" width="4" height="4" fill="#10f418"/>
<rect x="437.0" y="163.0" width="4" height="4" fill="#10f418"/>
<rect x="437.0" y="145.0" width="4" height="4" fill="#10f418"/>
<rect x="437.0" y="159.0" width="4" height="4" fill="#10f418"/>
<rect x="437.0" y="149.0" width="4" height="4" fill="#10f418"/>
<rect x="437.0" y="154.0" width="4" height="4" fill="#10f418"/>
<rect x="443.0" y="162.0" width="4" height="4" fill="#10f418"/>
<rect x="443.0" y="146.0" width="4" height="4" fill="#10f418"/>
<rect x="443.0" y="157.0" width="4" height="4" fill="#10f418"/>
<rect x="443.0" y="150.0" width="4" height="4" fill="#10f418"/>
<rect x="443.0" y="154.0" width="4" height="4" fill="#10f418"/>
<rect x="415.0" y="145.0" width="4" height="4" fill="#10f418"/>
<rect x="413.0" y="145.0" width="4" height="4" fill="#10f418"/>
<rect x="416.0" y="149.0" width="4" height="4" fill="#10f418"/>
<rect x="414.0" y="152.0" width="4" height="4" fill="#10f418"/>
<rect x="413.0" y="156.0" width="4" height="4" fill="#10f418"/>
<rect x="412.0" y="159.0" width="4" height="4" fill="#10f418"/>
<rect x="415.0" y="163.0" width="4" height="4" fill="#10f418"/>
<rect x="405.0" y="150.0" width="4" height="4" fill="#10f418"/>
<rect x="355.0" y="149.0" width="4" height="4" fill="#ff1080"/>
<rect x="355.0" y="158.0" width="4" height="4" fill="#ff1080"/>
<rect x="429.0" y="149.0" width="4" height="4" fill="#f01010"/>
<rect x="429.0" y="158.0" width="4" height="4" fill="#f01010"/>
<rect x="356.0" y="358.0" width="3" height="3" fill="#0808e8"/>
<rect x="360.0" y="358.0" width="3" height="3" fill="#0808e8"/>
<rect x="365.0" y="358.0" width="3" height="3" fill="#0808e8"/>
<rect x="368.0" y="358.0" width="3" height="3" fill="#0808e8"/>
<rect x="356.0" y="362.0" width="3" height="3" fill="#0808e8"/>
<rect x="372.0" y="362.0" width="3" height="3" fill="#0808e8"/>
<rect x="350.0" y="366.0" width="3" height="3" fill="#0808e8"/>
<rect x="373.0" y="366.0" width="3" height="3" fill="#0808e8"/>
<rect x="376.0" y="366.0" width="3" height="3" fill="#0808e8"/>
<rect x="348.0" y="369.0" width="3" height="3" fill="#0808e8"/>
<rect x="378.0" y="369.0" width="3" height="3" fill="#0808e8"/>
<rect x="352.0" y="372.0" width="3" height="3" fill="#0808e8"/>
<rect x="374.0" y="372.0" width="3" height="3" fill="#0808e8"/>
<rect x="356.0" y="375.0" width="3" height="3" fill="#0808e8"/>
<rect x="370.0" y="375.0" width="3" height="3" fill="#0808e8"/>
<rect x="354.0" y="360.0" width="3" height="3" fill="#0808e8"/>
<rect x="372.0" y="360.0" width="3" height="3" fill="#0808e8"/>
<rect x="359.0" y="361.0" width="3" height="3" fill="#0808e8"/>
<rect x="367.0" y="361.0" width="3" height="3" fill="#0808e8"/>
<rect x="352.0" y="438.0" width="3" height="3" fill="#0808e8"/>
<rect x="374.0" y="438.0" width="3" height="3" fill="#0808e8"/>
<rect x="347.0" y="442.0" width="3" height="3" fill="#0808e8"/>
<rect x="379.0" y="442.0" width="3" height="3" fill="#0808e8"/>
<rect x="344.0" y="443.0" width="3" height="3" fill="#0808e8"/>
<rect x="382.0" y="443.0" width="3" height="3" fill="#0808e8"/>
<rect x="342.0" y="446.0" width="3" height="3" fill="#0808e8"/>
<rect x="384.0" y="446.0" width="3" height="3" fill="#0808e8"/>
<rect x="346.0" y="448.0" width="3" height="3" fill="#0808e8"/>
<rect x="380.0" y="448.0" width="3" height="3" fill="#0808e8"/>
<rect x="350.0" y="448.0" width="3" height="3" fill="#0808e8"/>
<rect x="376.0" y="448.0" width="3" height="3" fill="#0808e8"/>
<rect x="354.0" y="448.0" width="3" height="3" fill="#0808e8"/>
<rect x="372.0" y="448.0" width="3" height="3" fill="#0808e8"/>
<rect x="336.0" y="451.0" width="3" height="3" fill="#0808e8"/>
<rect x="390.0" y="451.0" width="3" height="3" fill="#0808e8"/>
<rect x="338.0" y="451.0" width="3" height="3" fill="#0808e8"/>
<rect x="388.0" y="451.0" width="3" height="3" fill="#0808e8"/>
<rect x="346.0" y="458.0" width="3" height="3" fill="#0808e8"/>
<rect x="380.0" y="458.0" width="3" height="3" fill="#0808e8"/>
<rect x="332.0" y="462.0" width="3" height="3" fill="#0808e8"/>
<rect x="394.0" y="462.0" width="3" height="3" fill="#0808e8"/>
<rect x="350.0" y="462.0" width="3" height="3" fill="#0808e8"/>
<rect x="376.0" y="462.0" width="3" height="3" fill="#0808e8"/>
<rect x="328.0" y="469.0" width="3" height="3" fill="#0808e8"/>
<rect x="398.0" y="469.0" width="3" height="3" fill="#0808e8"/>
<rect x="332.0" y="471.0" width="3" height="3" fill="#0808e8"/>
<rect x="394.0" y="471.0" width="3" height="3" fill="#0808e8"/>
<rect x="341.0" y="470.0" width="3" height="3" fill="#0808e8"/>
<rect x="385.0" y="470.0" width="3" height="3" fill="#0808e8"/>
<rect x="344.0" y="472.0" width="3" height="3" fill="#0808e8"/>
<rect x="382.0" y="472.0" width="3" height="3" fill="#0808e8"/>
<rect x="351.0" y="470.0" width="3" height="3" fill="#0808e8"/>
<rect x="375.0" y="470.0" width="3" height="3" fill="#0808e8"/>
<rect x="337.0" y="466.0" width="3" height="3" fill="#0808e8"/>
<rect x="389.0" y="466.0" width="3" height="3" fill="#0808e8"/>
<rect x="355.0" y="456.0" width="3" height="3" fill="#0808e8"/>
<rect x="371.0" y="456.0" width="3" height="3" fill="#0808e8"/>
<rect x="334.0" y="456.0" width="3" height="3" fill="#0808e8"/>
<rect x="392.0" y="456.0" width="3" height="3" fill="#0808e8"/>
<rect x="364.0" y="472.0" width="3" height="3" fill="#0808e8"/>
<rect x="355.0" y="458.0" width="3" height="3" fill="#a01898"/>
<rect x="372.0" y="458.0" width="3" height="3" fill="#a01898"/>
<rect x="355.0" y="462.0" width="2" height="2" fill="#a01898"/>
<rect x="373.0" y="462.0" width="2" height="2" fill="#a01898"/>
<rect x="414.0" y="358.0" width="3" height="3" fill="#0808e8"/>
<rect x="418.0" y="358.0" width="3" height="3" fill="#0808e8"/>
<rect x="422.0" y="358.0" width="3" height="3" fill="#0808e8"/>
<rect x="425.0" y="358.0" width="3" height="3" fill="#0808e8"/>
<rect x="413.0" y="362.0" width="3" height="3" fill="#0808e8"/>
<rect x="429.0" y="362.0" width="3" height="3" fill="#0808e8"/>
<rect x="408.0" y="366.0" width="3" height="3" fill="#0808e8"/>
<rect x="430.0" y="366.0" width="3" height="3" fill="#0808e8"/>
<rect x="434.0" y="366.0" width="3" height="3" fill="#0808e8"/>
<rect x="406.0" y="369.0" width="3" height="3" fill="#0808e8"/>
<rect x="435.0" y="369.0" width="3" height="3" fill="#0808e8"/>
<rect x="409.0" y="372.0" width="3" height="3" fill="#0808e8"/>
<rect x="432.0" y="372.0" width="3" height="3" fill="#0808e8"/>
<rect x="414.0" y="375.0" width="3" height="3" fill="#0808e8"/>
<rect x="428.0" y="375.0" width="3" height="3" fill="#0808e8"/>
<rect x="411.0" y="360.0" width="3" height="3" fill="#0808e8"/>
<rect x="429.0" y="360.0" width="3" height="3" fill="#0808e8"/>
<rect x="416.0" y="361.0" width="3" height="3" fill="#0808e8"/>
<rect x="424.0" y="361.0" width="3" height="3" fill="#0808e8"/>
<rect x="409.0" y="438.0" width="3" height="3" fill="#0808e8"/>
<rect x="432.0" y="438.0" width="3" height="3" fill="#0808e8"/>
<rect x="405.0" y="442.0" width="3" height="3" fill="#0808e8"/>
<rect x="436.0" y="442.0" width="3" height="3" fill="#0808e8"/>
<rect x="401.0" y="443.0" width="3" height="3" fill="#0808e8"/>
<rect x="439.0" y="443.0" width="3" height="3" fill="#0808e8"/>
<rect x="399.0" y="446.0" width="3" height="3" fill="#0808e8"/>
<rect x="442.0" y="446.0" width="3" height="3" fill="#0808e8"/>
<rect x="403.0" y="448.0" width="3" height="3" fill="#0808e8"/>
<rect x="438.0" y="448.0" width="3" height="3" fill="#0808e8"/>
<rect x="407.0" y="448.0" width="3" height="3" fill="#0808e8"/>
<rect x="434.0" y="448.0" width="3" height="3" fill="#0808e8"/>
<rect x="411.0" y="448.0" width="3" height="3" fill="#0808e8"/>
<rect x="430.0" y="448.0" width="3" height="3" fill="#0808e8"/>
<rect x="393.0" y="451.0" width="3" height="3" fill="#0808e8"/>
<rect x="448.0" y="451.0" width="3" height="3" fill="#0808e8"/>
<rect x="396.0" y="451.0" width="3" height="3" fill="#0808e8"/>
<rect x="445.0" y="451.0" width="3" height="3" fill="#0808e8"/>
<rect x="403.0" y="458.0" width="3" height="3" fill="#0808e8"/>
<rect x="437.0" y="458.0" width="3" height="3" fill="#0808e8"/>
<rect x="390.0" y="462.0" width="3" height="3" fill="#0808e8"/>
<rect x="451.0" y="462.0" width="3" height="3" fill="#0808e8"/>
<rect x="408.0" y="462.0" width="3" height="3" fill="#0808e8"/>
<rect x="433.0" y="462.0" width="3" height="3" fill="#0808e8"/>
<rect x="385.0" y="469.0" width="3" height="3" fill="#0808e8"/>
<rect x="455.0" y="469.0" width="3" height="3" fill="#0808e8"/>
<rect x="389.0" y="471.0" width="3" height="3" fill="#0808e8"/>
<rect x="451.0" y="471.0" width="3" height="3" fill="#0808e8"/>
<rect x="398.0" y="470.0" width="3" height="3" fill="#0808e8"/>
<rect x="442.0" y="470.0" width="3" height="3" fill="#0808e8"/>
<rect x="401.0" y="472.0" width="3" height="3" fill="#0808e8"/>
<rect x="439.0" y="472.0" width="3" height="3" fill="#0808e8"/>
<rect x="408.0" y="470.0" width="3" height="3" fill="#0808e8"/>
<rect x="432.0" y="470.0" width="3" height="3" fill="#0808e8"/>
<rect x="394.0" y="466.0" width="3" height="3" fill="#0808e8"/>
<rect x="446.0" y="466.0" width="3" height="3" fill="#0808e8"/>
<rect x="412.0" y="456.0" width="3" height="3" fill="#0808e8"/>
<rect x="428.0" y="456.0" width="3" height="3" fill="#0808e8"/>
<rect x="392.0" y="456.0" width="3" height="3" fill="#0808e8"/>
<rect x="449.0" y="456.0" width="3" height="3" fill="#0808e8"/>
<rect x="421.0" y="472.0" width="3" height="3" fill="#0808e8"/>
<rect x="412.0" y="458.0" width="3" height="3" fill="#a01898"/>
<rect x="429.0" y="458.0" width="3" height="3" fill="#a01898"/>
<rect x="412.0" y="462.0" width="2" height="2" fill="#a01898"/>
<rect x="430.0" y="462.0" width="2" height="2" fill="#a01898"/><path d="M394.3 122.0L399.3 110.3L394.3 49.0L389.3 110.3Z" stroke="#ffffff" stroke-width="1" fill="#8a1010"/>
<path d="M399.3 110.3L389.3 110.3" stroke="#ffffff" stroke-width="1" fill="none"/>
<path d="M394.3 122.0L394.3 49.0" stroke="#b42020" stroke-width="1" fill="none"/>
<path d="M394.3 141.0L397.5 135.6L394.3 123.0L391.1 135.6Z" stroke="#ffffff" stroke-width="1" fill="#e8e0e0"/>
<path d="M397.5 135.6L391.1 135.6" stroke="#ffffff" stroke-width="1" fill="none"/>
<path d="M394.3 141.0L394.3 123.0" stroke="#ffffff" stroke-width="1" fill="none"/>
<rect x="393.0" y="124.0" width="2" height="2" fill="#c03030"/>
<rect x="393.0" y="128.0" width="2" height="2" fill="#c03030"/>
<rect x="393.0" y="131.0" width="2" height="2" fill="#c03030"/>
<path d="M394.3 187.0L398.1 178.6L394.3 145.0L390.5 178.6Z" stroke="#b8f4b8" stroke-width="1" fill="#18d418"/>
<path d="M398.1 178.6L390.5 178.6" stroke="#b8f4b8" stroke-width="1" fill="none"/>
<path d="M394.3 187.0L394.3 145.0" stroke="#18d418" stroke-width="1" fill="none"/>
<path d="M394.3 220.0L397.3 212.7L394.3 187.0L391.3 212.7Z" stroke="#d0e4ff" stroke-width="1" fill="#2878f0"/>
<path d="M397.3 212.7L391.3 212.7" stroke="#d0e4ff" stroke-width="1" fill="none"/>
<path d="M394.3 220.0L394.3 187.0" stroke="#5090f0" stroke-width="1" fill="none"/>
<path d="M394.3 262.0L397.9 252.8L394.3 220.0L390.7 252.8Z" stroke="#d0ffff" stroke-width="1" fill="#10e0f0"/>
<path d="M397.9 252.8L390.7 252.8" stroke="#d0ffff" stroke-width="1" fill="none"/>
<path d="M394.3 262.0L394.3 220.0" stroke="#10e0f0" stroke-width="1" fill="none"/>
<path d="M394.3 305.0L397.3 296.9L394.3 268.0L391.3 296.9Z" stroke="#ffd0d0" stroke-width="1" fill="#e01818"/>
<path d="M397.3 296.9L391.3 296.9" stroke="#ffd0d0" stroke-width="1" fill="none"/>
<path d="M394.3 305.0L394.3 268.0" stroke="#e01818" stroke-width="1" fill="none"/>
<path d="M357.2 156.0L341.0 150.4L276.0 156.0L341.0 161.6Z" stroke="#ffffff" stroke-width="1" fill="#c81878"/>
<path d="M341.0 150.4L341.0 161.6" stroke="#ffffff" stroke-width="1" fill="none"/>
<path d="M357.2 156.0L276.0 156.0" stroke="#ffffff" stroke-width="1" fill="none"/>
<path d="M431.1 156.0L447.5 161.6L513.0 156.0L447.5 150.4Z" stroke="#ffffff" stroke-width="1" fill="#cc1818"/>
<path d="M447.5 161.6L447.5 150.4" stroke="#ffffff" stroke-width="1" fill="none"/>
<path d="M431.1 156.0L513.0 156.0" stroke="#ffffff" stroke-width="1" fill="none"/>
<path d="M341.0 150.4L353.2 156.0L341.0 161.6Z" stroke="none" stroke-width="0" fill="#8a9a40"/>
<path d="M348.2 153.4L358.7 156.0L348.2 158.6Z" stroke="none" stroke-width="0" fill="#eaffea"/>
<path d="M341.0 150.4L341.0 161.6" stroke="#ffffff" stroke-width="1" fill="none"/>
<path d="M447.3 150.4L435.1 156.0L447.3 161.6Z" stroke="none" stroke-width="0" fill="#8a9a40"/>
<path d="M440.1 153.4L429.6 156.0L440.1 158.6Z" stroke="none" stroke-width="0" fill="#eaffea"/>
<path d="M447.3 150.4L447.3 161.6" stroke="#ffffff" stroke-width="1" fill="none"/>
<path d="M426.5 153.0L432.0 153.0L432.0 158.5L426.5 158.5Z" stroke="none" stroke-width="0" fill="#f0fff0"/>
<path d="M276.0 156.0L254.2 147.0L172.0 156.0L254.2 165.0Z" stroke="#ffffff" stroke-width="1" fill="#b8606a"/>
<path d="M254.2 147.0L254.2 165.0" stroke="#ffffff" stroke-width="1" fill="none"/>
<path d="M276.0 156.0L172.0 156.0" stroke="#ffffff" stroke-width="1" fill="none"/>
<path d="M513.0 156.0L534.4 165.0L616.6 156.0L534.4 147.0Z" stroke="#ffffff" stroke-width="1" fill="#10c8d8"/>
<path d="M534.4 165.0L534.4 147.0" stroke="#ffffff" stroke-width="1" fill="none"/>
<path d="M513.0 156.0L616.6 156.0" stroke="#ffffff" stroke-width="1" fill="none"/>
<path d="M92.0 156.0L123.0 156.0" stroke="#ffffff" stroke-width="2.4" fill="none"/>
<path d="M123.0 156.0L170.0 156.0" stroke="#ffffff" stroke-width="1.4" fill="none"/>
<path d="M88.5 153.5L93.0 153.5L93.0 158.0L88.5 158.0Z" stroke="none" stroke-width="0" fill="#8a9498"/>
<path d="M108.0 153.0L112.5 153.0L112.5 159.5L108.0 159.5Z" stroke="none" stroke-width="0" fill="#f0d0d0"/>
<path d="M127.0 153.5L141.0 153.5L141.0 159.0L127.0 159.0Z" stroke="none" stroke-width="0" fill="#ffe4ee"/>
<path d="M618.0 156.0L698.0 156.0" stroke="#ffffff" stroke-width="1.5" fill="none"/>
<path d="M695.0 154.0L699.0 154.0L699.0 158.0L695.0 158.0Z" stroke="none" stroke-width="0" fill="#8090a0"/>
<path d="M364.5 262.0L364.5 266.0" stroke="#ffffff" stroke-width="1" fill="none"/>
<path d="M364.5 266.0L357.9 283.3L364.5 368.0L371.1 283.3Z" stroke="#ffffff" stroke-width="1" fill="#e07a10"/>
<path d="M357.9 283.3L371.1 283.3" stroke="#ffffff" stroke-width="1" fill="none"/>
<path d="M364.5 266.0L364.5 368.0" stroke="#eca055" stroke-width="1" fill="none"/>
<path d="M364.5 376.5L359.0 390.0L364.5 462.0L370.0 390.0Z" stroke="#ffffff" stroke-width="1" fill="#0808e8"/>
<path d="M359.0 390.0L370.0 390.0" stroke="#ffffff" stroke-width="1" fill="none"/>
<path d="M364.5 376.5L364.5 462.0" stroke="#8080ff" stroke-width="1" fill="none"/>
<path d="M342.7 477.0L345.7 477.0L345.7 497.0L342.7 497.0Z" stroke="none" stroke-width="0" fill="#a8500c"/>
<path d="M384.9 477.0L387.9 477.0L387.9 497.0L384.9 497.0Z" stroke="none" stroke-width="0" fill="#a8500c"/>
<path d="M346.7 480.0L349.7 480.0L349.7 494.0L346.7 494.0" stroke="#a8500c" stroke-width="1" fill="none"/>
<path d="M383.9 480.0L380.9 480.0L380.9 494.0L383.9 494.0" stroke="#a8500c" stroke-width="1" fill="none"/>
<rect x="350.0" y="482.0" width="4" height="4" fill="#b0a010"/>
<rect x="376.0" y="482.0" width="4" height="4" fill="#b0a010"/>
<rect x="350.0" y="488.0" width="4" height="4" fill="#b0a010"/>
<rect x="376.0" y="488.0" width="4" height="4" fill="#b0a010"/>
<rect x="347.0" y="482.0" width="3" height="3" fill="#109010"/>
<rect x="380.0" y="482.0" width="3" height="3" fill="#109010"/>
<rect x="348.0" y="493.0" width="3" height="3" fill="#109010"/>
<rect x="379.0" y="493.0" width="3" height="3" fill="#109010"/>
<path d="M421.8 262.0L421.8 266.0" stroke="#ffffff" stroke-width="1" fill="none"/>
<path d="M421.8 266.0L415.2 283.3L421.8 368.0L428.4 283.3Z" stroke="#ffffff" stroke-width="1" fill="#e07a10"/>
<path d="M415.2 283.3L428.4 283.3" stroke="#ffffff" stroke-width="1" fill="none"/>
<path d="M421.8 266.0L421.8 368.0" stroke="#eca055" stroke-width="1" fill="none"/>
<path d="M421.8 376.5L416.3 390.0L421.8 462.0L427.3 390.0Z" stroke="#ffffff" stroke-width="1" fill="#0808e8"/>
<path d="M416.3 390.0L427.3 390.0" stroke="#ffffff" stroke-width="1" fill="none"/>
<path d="M421.8 376.5L421.8 462.0" stroke="#8080ff" stroke-width="1" fill="none"/>
<path d="M400.0 477.0L403.0 477.0L403.0 497.0L400.0 497.0Z" stroke="none" stroke-width="0" fill="#a8500c"/>
<path d="M442.2 477.0L445.2 477.0L445.2 497.0L442.2 497.0Z" stroke="none" stroke-width="0" fill="#a8500c"/>
<path d="M404.0 480.0L407.0 480.0L407.0 494.0L404.0 494.0" stroke="#a8500c" stroke-width="1" fill="none"/>
<path d="M441.2 480.0L438.2 480.0L438.2 494.0L441.2 494.0" stroke="#a8500c" stroke-width="1" fill="none"/>
<rect x="408.0" y="482.0" width="4" height="4" fill="#b0a010"/>
<rect x="434.0" y="482.0" width="4" height="4" fill="#b0a010"/>
<rect x="408.0" y="488.0" width="4" height="4" fill="#b0a010"/>
<rect x="434.0" y="488.0" width="4" height="4" fill="#b0a010"/>
<rect x="404.0" y="482.0" width="3" height="3" fill="#109010"/>
<rect x="438.0" y="482.0" width="3" height="3" fill="#109010"/>
<rect x="405.0" y="493.0" width="3" height="3" fill="#109010"/>
<rect x="437.0" y="493.0" width="3" height="3" fill="#109010"/><ellipse cx="394.3" cy="48.0" rx="5.0" ry="5.0" stroke="#ffffff" stroke-width="1" fill="none"/>
<ellipse cx="394.3" cy="187.0" rx="5.5" ry="5.5" stroke="#ffffff" stroke-width="1" fill="none"/>
<ellipse cx="394.3" cy="220.0" rx="5.5" ry="5.5" stroke="#ffffff" stroke-width="1" fill="none"/>
<ellipse cx="394.3" cy="262.0" rx="5.5" ry="5.5" stroke="#ffffff" stroke-width="1" fill="none"/>
<rect x="391.0" y="302.0" width="6" height="6" fill="#ffd8d8"/>
<rect x="264.0" y="150.0" width="4" height="4" fill="#ff1486"/>
<rect x="264.0" y="154.0" width="4" height="4" fill="#ff1486"/>
<rect x="264.0" y="158.0" width="4" height="4" fill="#ff1486"/>
<rect x="267.0" y="147.0" width="4" height="4" fill="#ff1486"/>
<rect x="267.0" y="150.0" width="4" height="4" fill="#ff1486"/>
<rect x="267.0" y="154.0" width="4" height="4" fill="#ff1486"/>
<rect x="267.0" y="158.0" width="4" height="4" fill="#ff1486"/>
<rect x="267.0" y="161.0" width="4" height="4" fill="#ff1486"/>
<rect x="270.0" y="147.0" width="4" height="4" fill="#ff1486"/>
<rect x="270.0" y="150.0" width="4" height="4" fill="#ff1486"/>
<rect x="270.0" y="154.0" width="4" height="4" fill="#ff1486"/>
<rect x="270.0" y="158.0" width="4" height="4" fill="#ff1486"/>
<rect x="270.0" y="161.0" width="4" height="4" fill="#ff1486"/>
<rect x="277.0" y="147.0" width="4" height="4" fill="#ff1486"/>
<rect x="277.0" y="150.0" width="4" height="4" fill="#ff1486"/>
<rect x="277.0" y="154.0" width="4" height="4" fill="#ff1486"/>
<rect x="277.0" y="158.0" width="4" height="4" fill="#ff1486"/>
<rect x="277.0" y="161.0" width="4" height="4" fill="#ff1486"/>
<rect x="280.0" y="147.0" width="4" height="4" fill="#ff1486"/>
<rect x="280.0" y="150.0" width="4" height="4" fill="#ff1486"/>
<rect x="280.0" y="154.0" width="4" height="4" fill="#ff1486"/>
<rect x="280.0" y="158.0" width="4" height="4" fill="#ff1486"/>
<rect x="280.0" y="161.0" width="4" height="4" fill="#ff1486"/>
<rect x="284.0" y="150.0" width="4" height="4" fill="#ff1486"/>
<rect x="284.0" y="154.0" width="4" height="4" fill="#ff1486"/>
<rect x="284.0" y="158.0" width="4" height="4" fill="#ff1486"/>
<path d="M273.6 144.5L278.0 144.5L278.0 168.0L273.6 168.0Z" stroke="none" stroke-width="0" fill="#f08474"/>
<path d="M270.6 151.0L280.6 151.0" stroke="#90a3a7" stroke-width="1" fill="none"/>
<path d="M270.6 160.0L280.6 160.0" stroke="#90a3a7" stroke-width="1" fill="none"/>
<ellipse cx="275.6" cy="156.0" rx="4.5" ry="4.5" stroke="#d8c8d0" stroke-width="1" fill="none"/>
<rect x="501.0" y="150.0" width="4" height="4" fill="#f01414"/>
<rect x="501.0" y="158.0" width="4" height="4" fill="#f01414"/>
<rect x="504.0" y="150.0" width="4" height="4" fill="#f01414"/>
<rect x="504.0" y="154.0" width="4" height="4" fill="#f01414"/>
<rect x="504.0" y="158.0" width="4" height="4" fill="#f01414"/>
<rect x="504.0" y="161.0" width="4" height="4" fill="#f01414"/>
<rect x="508.0" y="147.0" width="4" height="4" fill="#f01414"/>
<rect x="508.0" y="154.0" width="4" height="4" fill="#f01414"/>
<rect x="508.0" y="158.0" width="4" height="4" fill="#f01414"/>
<rect x="508.0" y="161.0" width="4" height="4" fill="#f01414"/>
<rect x="514.0" y="147.0" width="4" height="4" fill="#f01414"/>
<rect x="514.0" y="150.0" width="4" height="4" fill="#f01414"/>
<rect x="514.0" y="154.0" width="4" height="4" fill="#f01414"/>
<rect x="514.0" y="161.0" width="4" height="4" fill="#f01414"/>
<rect x="518.0" y="147.0" width="4" height="4" fill="#f01414"/>
<rect x="518.0" y="150.0" width="4" height="4" fill="#f01414"/>
<rect x="518.0" y="154.0" width="4" height="4" fill="#f01414"/>
<rect x="518.0" y="158.0" width="4" height="4" fill="#f01414"/>
<rect x="521.0" y="150.0" width="4" height="4" fill="#f01414"/>
<rect x="521.0" y="158.0" width="4" height="4" fill="#f01414"/>
<path d="M511.0 144.5L515.4 144.5L515.4 168.0L511.0 168.0Z" stroke="none" stroke-width="0" fill="#10f0ff"/>
<path d="M508.0 151.0L518.0 151.0" stroke="#90a3a7" stroke-width="1" fill="none"/>
<path d="M508.0 160.0L518.0 160.0" stroke="#90a3a7" stroke-width="1" fill="none"/>
<ellipse cx="513.0" cy="156.0" rx="4.5" ry="4.5" stroke="#d8c8d0" stroke-width="1" fill="none"/>
<ellipse cx="88.3" cy="156.0" rx="4.8" ry="4.8" stroke="#ffffff" stroke-width="1" fill="none"/>
<ellipse cx="109.4" cy="156.0" rx="5.0" ry="5.0" stroke="#ffffff" stroke-width="1" fill="none"/>
<ellipse cx="166.5" cy="156.0" rx="5.2" ry="5.2" stroke="#ffffff" stroke-width="1" fill="none"/>
<ellipse cx="126.5" cy="156.0" rx="5.5" ry="5.0" stroke="#ffffff" stroke-width="1" fill="none"/>
<ellipse cx="136.0" cy="156.0" rx="6.0" ry="4.5" stroke="#fff0f8" stroke-width="1" fill="none"/>
<ellipse cx="620.0" cy="156.0" rx="5.2" ry="5.2" stroke="#ffffff" stroke-width="1" fill="none"/>
<ellipse cx="629.5" cy="156.0" rx="4.5" ry="4.5" stroke="#ffffff" stroke-width="1" fill="none"/>
<ellipse cx="677.7" cy="156.0" rx="5.0" ry="5.0" stroke="#ffffff" stroke-width="1" fill="none"/>
<ellipse cx="697.0" cy="156.0" rx="5.0" ry="5.0" stroke="#ffffff" stroke-width="1" fill="none"/>
<path d="M361.2 258.3L367.7 258.3L367.7 262.6L361.2 262.6Z" stroke="#ffffff" stroke-width="1" fill="#ffc898"/>
<path d="M359.0 461.0L369.5 461.0L369.5 471.5L359.0 471.5Z" stroke="#ffffff" stroke-width="1" fill="#f4eef4"/>
<path d="M361.0 463.5L367.5 469.5L361.0 469.5L367.5 463.5L361.0 463.5" stroke="#982098" stroke-width="1" fill="none"/>
<path d="M362.5 466.5L366.0 466.5" stroke="#982098" stroke-width="2" fill="none"/>
<ellipse cx="364.0" cy="487.9" rx="5.3" ry="6.5" stroke="#ffffff" stroke-width="1.2" fill="#dcdcdc"/>
<path d="M418.5 258.3L425.0 258.3L425.0 262.6L418.5 262.6Z" stroke="#ffffff" stroke-width="1" fill="#ffc898"/>
<path d="M416.3 461.0L426.8 461.0L426.8 471.5L416.3 471.5Z" stroke="#ffffff" stroke-width="1" fill="#f4eef4"/>
<path d="M418.3 463.5L424.8 469.5L418.3 469.5L424.8 463.5L418.3 463.5" stroke="#982098" stroke-width="1" fill="none"/>
<path d="M419.8 466.5L423.3 466.5" stroke="#982098" stroke-width="2" fill="none"/>
<ellipse cx="421.3" cy="487.9" rx="5.3" ry="6.5" stroke="#ffffff" stroke-width="1.2" fill="#dcdcdc"/></g>
</svg>
</body></html>
